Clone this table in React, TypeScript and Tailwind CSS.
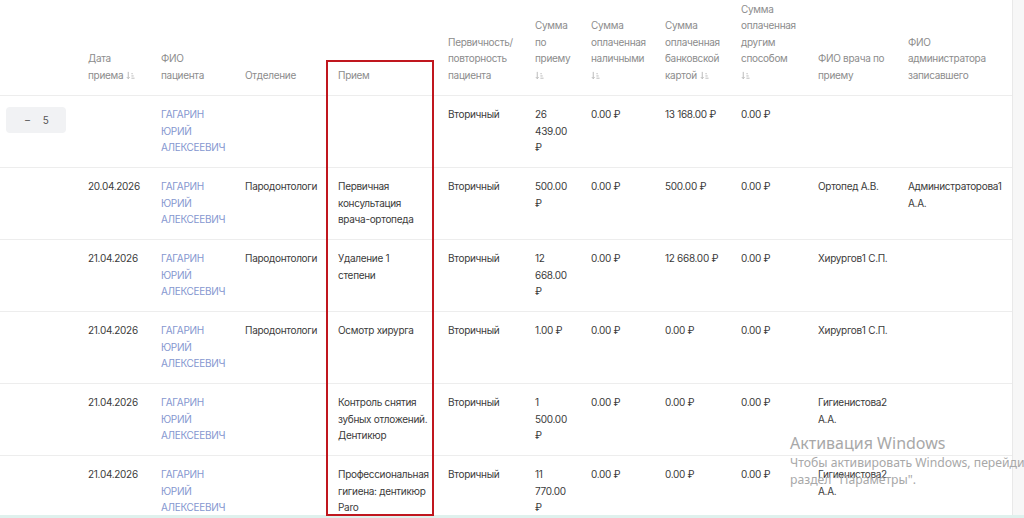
import React from "react";

const colW = [
  "w-[88px]",
  "w-[73px]",
  "w-[84px]",
  "w-[93px]",
  "w-[110px]",
  "w-[87px]",
  "w-[56px]",
  "w-[74px]",
  "w-[76px]",
  "w-[77px]",
  "w-[90px]",
  "w-[104px]",
];

type Head = { lines: string[]; sort?: "inline" | "line" };

const heads: Head[] = [
  { lines: [] },
  { lines: ["Дата", "приема"], sort: "inline" },
  { lines: ["ФИО", "пациента"] },
  { lines: ["Отделение"] },
  { lines: ["Прием"] },
  { lines: ["Первичность/", "повторность", "пациента"] },
  { lines: ["Сумма", "по", "приему"], sort: "line" },
  { lines: ["Сумма", "оплаченная", "наличными"], sort: "line" },
  { lines: ["Сумма", "оплаченная", "банковской", "картой"], sort: "inline" },
  { lines: ["Сумма", "оплаченная", "другим", "способом"], sort: "line" },
  { lines: ["ФИО врача по", "приему"] },
  { lines: ["ФИО", "администратора", "записавшего"] },
];

const name = ["ГАГАРИН", "ЮРИЙ", "АЛЕКСЕЕВИЧ"];

const rows: { group?: number; cells: string[][] }[] = [
  {
    group: 5,
    cells: [[], [], name, [], [], ["Вторичный"], ["26", "439.00", "₽"], ["0.00 ₽"], ["13 168.00 ₽"], ["0.00 ₽"], [], []],
  },
  {
    cells: [
      [],
      ["20.04.2026"],
      name,
      ["Пародонтологи"],
      ["Первичная", "консультация", "врача-ортопеда"],
      ["Вторичный"],
      ["500.00", "₽"],
      ["0.00 ₽"],
      ["500.00 ₽"],
      ["0.00 ₽"],
      ["Ортопед А.В."],
      ["Администраторова1", "А.А."],
    ],
  },
  {
    cells: [
      [],
      ["21.04.2026"],
      name,
      ["Пародонтологи"],
      ["Удаление 1", "степени"],
      ["Вторичный"],
      ["12", "668.00", "₽"],
      ["0.00 ₽"],
      ["12 668.00 ₽"],
      ["0.00 ₽"],
      ["Хирургов1 С.П."],
      [],
    ],
  },
  {
    cells: [
      [],
      ["21.04.2026"],
      name,
      ["Пародонтологи"],
      ["Осмотр хирурга"],
      ["Вторичный"],
      ["1.00 ₽"],
      ["0.00 ₽"],
      ["0.00 ₽"],
      ["0.00 ₽"],
      ["Хирургов1 С.П."],
      [],
    ],
  },
  {
    cells: [
      [],
      ["21.04.2026"],
      name,
      [],
      ["Контроль снятия", "зубных отложений.", "Дентикюр"],
      ["Вторичный"],
      ["1", "500.00", "₽"],
      ["0.00 ₽"],
      ["0.00 ₽"],
      ["0.00 ₽"],
      ["Гигиенистова2", "А.А."],
      [],
    ],
  },
  {
    cells: [
      [],
      ["21.04.2026"],
      name,
      [],
      ["Профессиональная", "гигиена: дентикюр", "Paro"],
      ["Вторичный"],
      ["11", "770.00", "₽"],
      ["0.00 ₽"],
      ["0.00 ₽"],
      ["0.00 ₽"],
      ["Гигиенистова2", "А.А."],
      [],
    ],
  },
];

function SortIcon() {
  return (
    <svg width="9" height="9" viewBox="0 0 10 10" fill="none" stroke="#b4b4b4" strokeWidth="1" className="inline-block ml-[3px] align-[-1px]">
      <path d="M2.5 1v7.5M1 6.8l1.5 1.7L4 6.8" />
      <path d="M6 3h1.5M6 5.5h2.5M6 8h3.5" />
    </svg>
  );
}

export default function App() {
  return (
    <div className="relative w-[1024px] h-[518px] overflow-hidden bg-white flex flex-col" style={{ fontFamily: "Inter, 'Noto Sans', sans-serif" }}>
      <div className="flex flex-1 min-h-0">
        <div className="w-[1012px] overflow-hidden text-[10px] leading-[16.5px] tracking-[-0.3px]">
          {/* header */}
          <div className="flex items-end h-[96px] pb-[12px] border-b border-[#ededed] text-[#8c8c8c]">
            {heads.map((h, i) => (
              <div key={i} className={`${colW[i]} shrink-0`}>
                {h.lines.map((l, j) => (
                  <div key={j} className="whitespace-nowrap">
                    {l}
                    {h.sort === "inline" && j === h.lines.length - 1 && <SortIcon />}
                  </div>
                ))}
                {h.sort === "line" && (
                  <div className="-ml-[3px]">
                    <SortIcon />
                  </div>
                )}
              </div>
            ))}
          </div>

          {/* rows */}
          {rows.map((r, ri) => (
            <div key={ri} className="flex h-[72px] pt-[10px] border-b border-[#ededed] text-[#3b3b3b]">
              {r.cells.map((c, ci) => (
                <div key={ci} className={`${colW[ci]} shrink-0 ${ci === 2 ? "text-[#8597d0]" : ""}`}>
                  {ci === 0 && r.group !== undefined ? (
                    <div className="ml-[6px] mt-[1px] w-[60px] h-[26px] rounded-[4px] bg-[#f1f2f4] flex items-center text-[#555]">
                      <span className="ml-[19px]">–</span>
                      <span className="ml-[13px]">{r.group}</span>
                    </div>
                  ) : (
                    c.map((l, li) => (
                      <div key={li} className="whitespace-nowrap">
                        {l}
                      </div>
                    ))
                  )}
                </div>
              ))}
            </div>
          ))}
        </div>
        <div className="w-[12px] bg-[#f7f7f7] border-l border-[#e9e9e9]" />
      </div>
      <div className="h-[3px] bg-[#dff1ed]" />

      {/* annotation frame */}
      <div className="absolute left-[326px] top-[60px] w-[108px] h-[456px] border-2 border-[#c0171e] pointer-events-none" />

      {/* windows watermark */}
      <div className="absolute left-[790px] top-[433px] whitespace-nowrap text-[#a8a8a8] pointer-events-none" style={{ fontFamily: "'Noto Sans', 'Open Sans', sans-serif" }}>
        <div className="text-[16px] leading-[21px]">Активация Windows</div>
        <div className="text-[12.2px] leading-[17px]">Чтобы активировать Windows, перейдите в</div>
        <div className="text-[12.2px] leading-[17px]">раздел "Параметры".</div>
      </div>
    </div>
  );
}
